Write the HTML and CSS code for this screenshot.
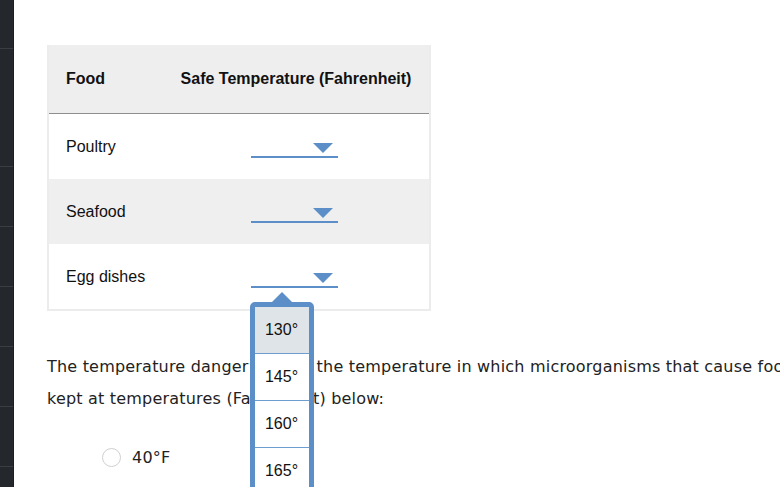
FILE: index.html
```html
<!DOCTYPE html>
<html>
<head>
    <title>Food Safety Quiz</title>
    <link rel="stylesheet" href="styles.css">
</head>
<body>
    <div class="page">
        <nav class="rail">
            <div class="rail-item top"></div>
            <div class="rail-item tall"></div>
            <div class="rail-item"></div>
            <div class="rail-item"></div>
            <div class="rail-item"></div>
            <div class="rail-item"></div>
            <div class="rail-item"></div>
            <div class="rail-item"></div>
        </nav>

        <main class="content">
            <table class="temps">
                <thead>
                    <tr>
                        <th class="col-food">Food</th>
                        <th class="col-temp">Safe Temperature (Fahrenheit)</th>
                    </tr>
                </thead>
                <tbody>
                    <tr>
                        <td class="food">Poultry</td>
                        <td class="pick-cell"><div class="pick"><span class="caret"></span></div></td>
                    </tr>
                    <tr class="alt">
                        <td class="food">Seafood</td>
                        <td class="pick-cell"><div class="pick"><span class="caret"></span></div></td>
                    </tr>
                    <tr>
                        <td class="food">Egg dishes</td>
                        <td class="pick-cell">
                            <div class="pick open">
                                <span class="caret"></span>
                                <ul class="menu">
                                    <li class="active">130°</li>
                                    <li>145°</li>
                                    <li>160°</li>
                                    <li>165°</li>
                                </ul>
                            </div>
                        </td>
                    </tr>
                </tbody>
            </table>

            <p class="question">The temperature danger zone is the temperature in which microorganisms that cause food poisoning grow rapidly. Food should not be<br>kept at temperatures (Fahrenheit) below:</p>

            <label class="choice"><span class="radio"></span>40°F</label>
        </main>
    </div>
</body>
</html>
```

FILE: styles.css
```css
html, body {
    margin: 0;
    height: 100%;
    overflow: hidden;
    background: #fff;
}

.page {
    display: flex;
    height: 100%;
}

/* dark navigation strip */
.rail {
    width: 13px;
    flex: none;
    background-color: #24272b;
    border-right: 1px solid #1b1d20;
}

.rail-item {
    height: 59px;
    border-bottom: 1px solid #3a3d42;
}

.rail-item.top {
    height: 48px;
}

.rail-item.tall {
    height: 117px;
}

.content {
    padding: 45px 0 0 33px;
}

/* food table */
.temps {
    border-collapse: separate;
    border-spacing: 0;
    border: 2px solid #ececec;
    border-top: none;
    width: 384px;
    font-family: "Liberation Sans", Arial, sans-serif;
    font-size: 16px;
    color: #111;
}

.temps th {
    height: 68px;
    background-color: #eeeeee;
    border-bottom: 1px solid #8e8e8e;
    font-weight: bold;
    padding: 0;
}

.temps .col-food {
    width: 97px;
    text-align: left;
    padding-left: 17px;
}

.temps .col-temp {
    text-align: center;
}

.temps td {
    height: 65px;
    padding: 0;
    vertical-align: middle;
}

.temps tr.alt td {
    background-color: #efefef;
}

.temps .food {
    padding-left: 17px;
}

/* dropdown */
.pick {
    position: relative;
    width: 87px;
    height: 18px;
    margin: 3px auto 0;
    border-bottom: 2px solid #5c8ec7;
    left: -2px;
}

.caret {
    position: absolute;
    right: 5px;
    top: 5px;
    border-left: 10px solid transparent;
    border-right: 10px solid transparent;
    border-top: 10px solid #5c8ec7;
}

.menu {
    position: absolute;
    top: 34px;
    left: -1px;
    width: 54px;
    margin: 0;
    padding: 0;
    list-style: none;
    background: #fff;
    border: 5px solid #5c8ec7;
    border-radius: 5px;
    z-index: 5;
}

.menu::before {
    content: "";
    position: absolute;
    top: -15px;
    left: 17px;
    border-left: 10px solid transparent;
    border-right: 10px solid transparent;
    border-bottom: 10px solid #5c8ec7;
}

.menu li {
    height: 46px;
    line-height: 46px;
    text-align: center;
    border-bottom: 1px solid #6f9dd0;
    font-size: 16px;
    color: #111;
}

.menu li.active {
    background-color: #dfe4e8;
}

/* question text */
.question {
    margin: 40px 0 0;
    font-family: "DejaVu Sans", Verdana, sans-serif;
    font-size: 16px;
    letter-spacing: 0.2px;
    line-height: 32px;
    color: #222;
    white-space: nowrap;
}

.choice {
    display: flex;
    align-items: center;
    gap: 11px;
    margin: 26px 0 0 55px;
    height: 32px;
    font-family: "DejaVu Sans", Verdana, sans-serif;
    font-size: 16px;
    letter-spacing: 0.2px;
    color: #222;
}

.radio {
    width: 17px;
    height: 17px;
    border: 1.5px solid #d0d0d0;
    border-radius: 50%;
}
```
